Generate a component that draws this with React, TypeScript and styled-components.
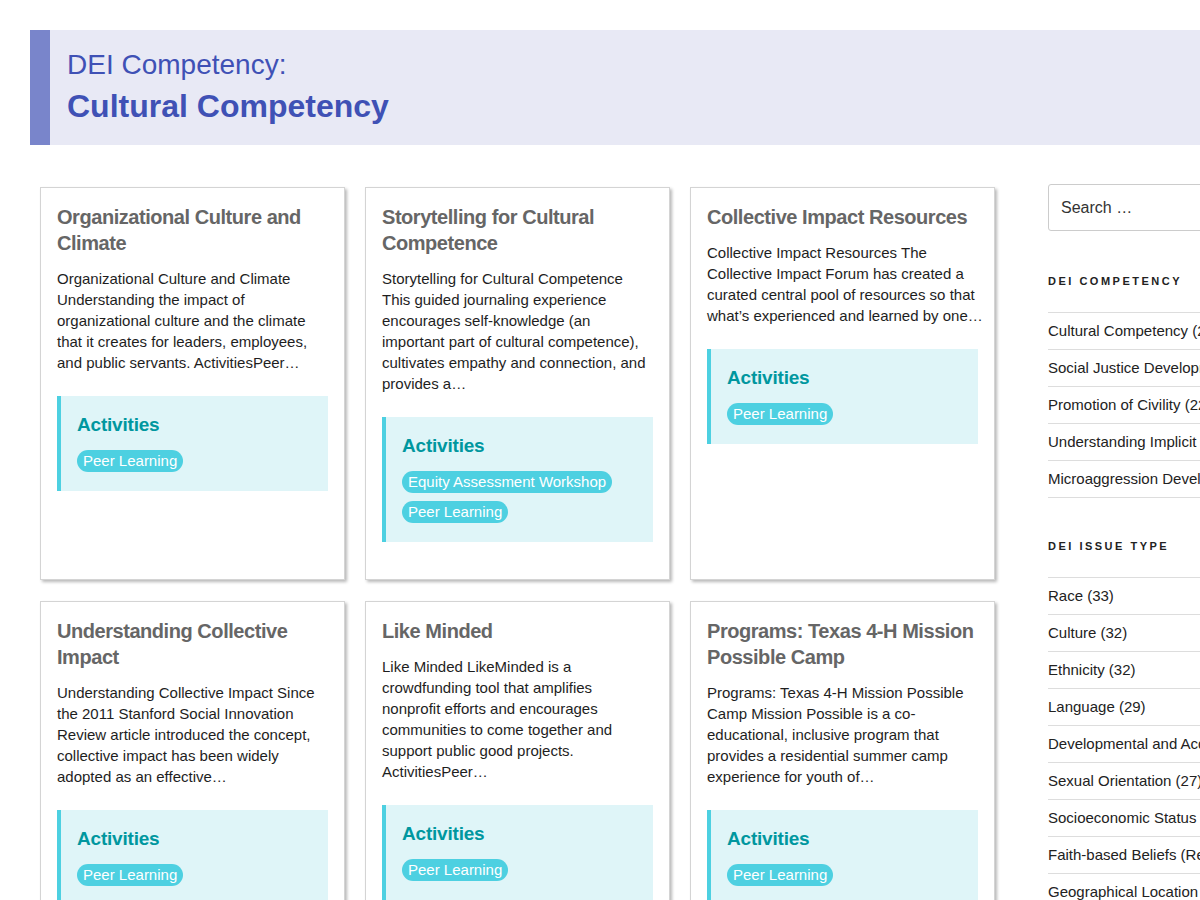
import styled, { createGlobalStyle } from 'styled-components';

const GlobalStyle = createGlobalStyle`
  html, body {
    margin: 0;
    padding: 0;
    background: #fff;
    overflow: hidden;
  }
  body {
    font-family: 'Liberation Sans', Arial, sans-serif;
    color: #222;
  }
`;

const Page = styled.div`
  width: 1300px;
  padding: 30px 0 0 30px;
`;

const Banner = styled.header`
  background: #e8e9f5;
  border-left: 20px solid #7985cb;
  padding: 18px 17px 19px;
`;

const Eyebrow = styled.div`
  font-size: 28px;
  line-height: 34px;
  font-weight: 400;
  color: #3f51b5;
`;

const PageTitle = styled.h1`
  margin: 4px 0 0;
  font-size: 32px;
  line-height: 40px;
  font-weight: 700;
  color: #3f51b5;
`;

const Body = styled.div`
  display: flex;
  align-items: flex-start;
  gap: 53px;
  padding: 42px 0 0 10px;
`;

const Grid = styled.div`
  display: grid;
  grid-template-columns: repeat(3, 305px);
  gap: 21px 20px;
`;

const Card = styled.article`
  background: #fff;
  border: 1px solid #d4d4d4;
  box-shadow: 2px 2px 3px rgba(0, 0, 0, 0.28);
  padding: 16px 16px 37px;
`;

const CardTitle = styled.h2`
  margin: 0;
  font-size: 20px;
  line-height: 26px;
  font-weight: 700;
  letter-spacing: -0.45px;
  color: #666;
`;

const Excerpt = styled.p`
  margin: 12px 0 0;
  font-size: 15px;
  line-height: 21px;
  color: #1e1e1e;
`;

const ExcerptLine = styled.span`
  display: block;
  white-space: nowrap;
`;

const ActivityBox = styled.div`
  margin-top: 23px;
  background: #dff5f8;
  border-left: 4px solid #4dd0e1;
  padding: 16px 16px 19px;
`;

const ActivityHeading = styled.h3`
  margin: 0 0 12px;
  font-size: 19px;
  line-height: 26px;
  font-weight: 700;
  letter-spacing: -0.2px;
  color: #00979f;
`;

const Tags = styled.div`
  display: flex;
  flex-direction: column;
  align-items: flex-start;
  gap: 8px;
`;

const Tag = styled.span`
  display: inline-block;
  background: #4dd0e1;
  color: #fff;
  font-size: 15px;
  line-height: 22px;
  padding: 0 6px;
  border-radius: 11px;
`;

const Sidebar = styled.aside`
  width: 260px;
  margin-top: -3px;
`;

const SearchField = styled.input`
  box-sizing: border-box;
  width: 100%;
  height: 47px;
  border: 1px solid #ccc;
  border-radius: 3px;
  padding: 0 12px;
  font-family: 'Liberation Sans', Arial, sans-serif;
  font-size: 16px;
  color: #333;
  &::placeholder {
    color: #333;
  }
`;

const WidgetTitle = styled.h4`
  margin: 43px 0 24px;
  font-size: 11px;
  line-height: 14px;
  font-weight: 900;
  letter-spacing: 2.5px;
  text-transform: uppercase;
  color: #222;

  ul + & {
    margin-top: 41px;
  }
`;

const List = styled.ul`
  list-style: none;
  margin: 0;
  padding: 0;
  border-top: 1px solid #ddd;
`;

const Item = styled.li`
  font-size: 15px;
  line-height: 20px;
  padding: 8px 0;
  border-bottom: 1px solid #ddd;
  color: #222;
  white-space: nowrap;
`;

type Resource = {
  title: string;
  excerpt: string[];
  tags: string[];
};

const resources: Resource[] = [
  {
    title: 'Organizational Culture and Climate',
    excerpt: [
      'Organizational Culture and Climate',
      'Understanding the impact of',
      'organizational culture and the climate',
      'that it creates for leaders, employees,',
      'and public servants. ActivitiesPeer…',
    ],
    tags: ['Peer Learning'],
  },
  {
    title: 'Storytelling for Cultural Competence',
    excerpt: [
      'Storytelling for Cultural Competence',
      'This guided journaling experience',
      'encourages self-knowledge (an',
      'important part of cultural competence),',
      'cultivates empathy and connection, and',
      'provides a…',
    ],
    tags: ['Equity Assessment Workshop', 'Peer Learning'],
  },
  {
    title: 'Collective Impact Resources',
    excerpt: [
      'Collective Impact Resources The',
      'Collective Impact Forum has created a',
      'curated central pool of resources so that',
      'what’s experienced and learned by one…',
    ],
    tags: ['Peer Learning'],
  },
  {
    title: 'Understanding Collective Impact',
    excerpt: [
      'Understanding Collective Impact Since',
      'the 2011 Stanford Social Innovation',
      'Review article introduced the concept,',
      'collective impact has been widely',
      'adopted as an effective…',
    ],
    tags: ['Peer Learning'],
  },
  {
    title: 'Like Minded',
    excerpt: [
      'Like Minded LikeMinded is a',
      'crowdfunding tool that amplifies',
      'nonprofit efforts and encourages',
      'communities to come together and',
      'support public good projects.',
      'ActivitiesPeer…',
    ],
    tags: ['Peer Learning'],
  },
  {
    title: 'Programs: Texas 4-H Mission Possible Camp',
    excerpt: [
      'Programs: Texas 4-H Mission Possible',
      'Camp Mission Possible is a co-',
      'educational, inclusive program that',
      'provides a residential summer camp',
      'experience for youth of…',
    ],
    tags: ['Peer Learning'],
  },
];

const competencies = [
  'Cultural Competency (24)',
  'Social Justice Development (23)',
  'Promotion of Civility (22)',
  'Understanding Implicit Bias (21)',
  'Microaggression Development (20)',
];

const issueTypes = [
  'Race (33)',
  'Culture (32)',
  'Ethnicity (32)',
  'Language (29)',
  'Developmental and Acquired Disabilities (28)',
  'Sexual Orientation (27)',
  'Socioeconomic Status (27)',
  'Faith-based Beliefs (Religion) (26)',
  'Geographical Location (25)',
];

const ResourceCard = ({ resource }: { resource: Resource }) => (
  <Card>
    <CardTitle>{resource.title}</CardTitle>
    <Excerpt>
      {resource.excerpt.map((line) => (
        <ExcerptLine key={line}>{line}</ExcerptLine>
      ))}
    </Excerpt>
    <ActivityBox>
      <ActivityHeading>Activities</ActivityHeading>
      <Tags>
        {resource.tags.map((t) => (
          <Tag key={t}>{t}</Tag>
        ))}
      </Tags>
    </ActivityBox>
  </Card>
);

export default function App() {
  return (
    <>
      <GlobalStyle />
      <Page>
        <Banner>
          <Eyebrow>DEI Competency:</Eyebrow>
          <PageTitle>Cultural Competency</PageTitle>
        </Banner>
        <Body>
          <Grid>
            {resources.map((r) => (
              <ResourceCard key={r.title} resource={r} />
            ))}
          </Grid>
          <Sidebar>
            <SearchField placeholder="Search …" />
            <WidgetTitle>DEI Competency</WidgetTitle>
            <List>
              {competencies.map((c) => (
                <Item key={c}>{c}</Item>
              ))}
            </List>
            <WidgetTitle>DEI Issue Type</WidgetTitle>
            <List>
              {issueTypes.map((c) => (
                <Item key={c}>{c}</Item>
              ))}
            </List>
          </Sidebar>
        </Body>
      </Page>
    </>
  );
}
